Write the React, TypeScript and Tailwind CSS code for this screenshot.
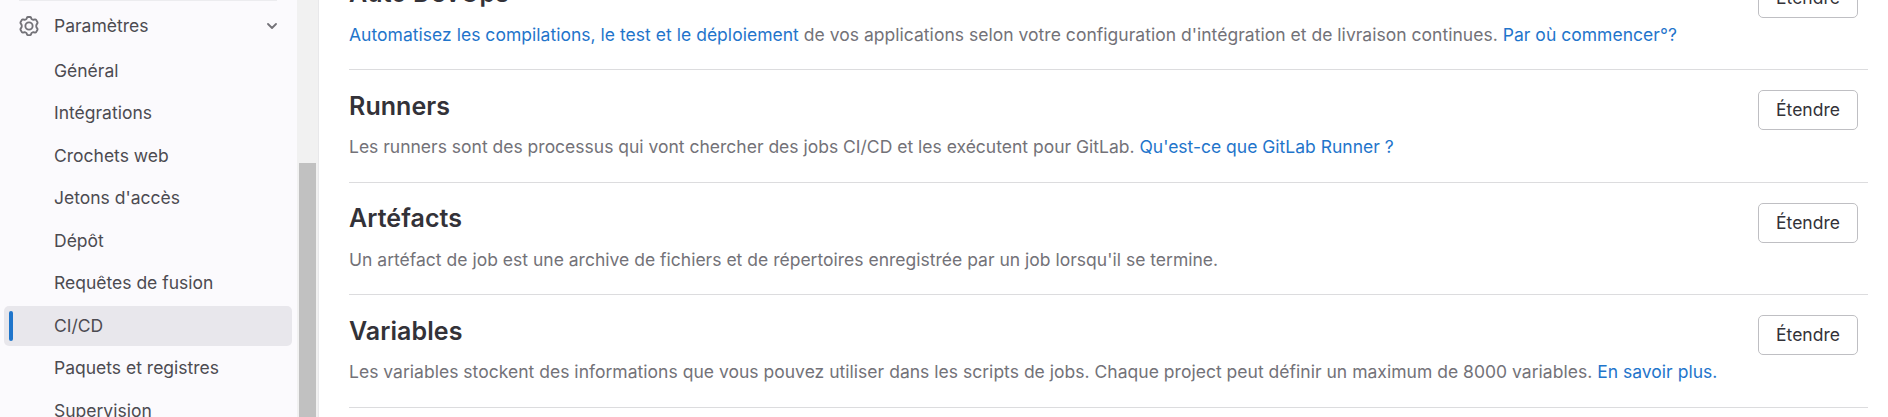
import React from "react";

const items = [
  "Général",
  "Intégrations",
  "Crochets web",
  "Jetons d'accès",
  "Dépôt",
  "Requêtes de fusion",
  "CI/CD",
  "Paquets et registres",
  "Supervision",
];

function GearIcon() {
  return (
    <svg className="h-5 w-5" viewBox="0 0 16 16" fill="none" stroke="#737278" strokeWidth="1.5" strokeLinejoin="round">
      <path d="M7.1.75H8.9Q9.4.75 9.6 1.3L9.9 2.1Q10.1 2.6 10.6 2.8Q11.1 3.1 11.6 3L12.9 2.75Q13.4 2.7 13.7 3.1L14.8 5Q15 5.5 14.7 5.9L14.1 6.7Q13.8 7.1 13.8 8T14.1 9.3L14.7 10.1Q15 10.5 14.8 11L13.7 12.9Q13.4 13.3 12.9 13.25L11.6 13Q11.1 12.9 10.6 13.2Q10.1 13.4 9.9 13.9L9.6 14.7Q9.4 15.25 8.9 15.25H7.1Q6.6 15.25 6.4 14.7L6.1 13.9Q5.9 13.4 5.4 13.2Q4.9 12.9 4.4 13L3.1 13.25Q2.6 13.3 2.3 12.9L1.2 11Q1 10.5 1.3 10.1L1.9 9.3Q2.2 8.9 2.2 8T1.9 6.7L1.3 5.9Q1 5.5 1.2 5L2.3 3.1Q2.6 2.7 3.1 2.75L4.4 3Q4.9 3.1 5.4 2.8Q5.9 2.6 6.1 2.1L6.4 1.3Q6.6.75 7.1.75Z" />
      <circle cx="8" cy="8" r="2.9" />
    </svg>
  );
}

type SectionProps = { title: string; tracking?: string; children: React.ReactNode };

function Section({ title, tracking = "", children }: SectionProps) {
  return (
    <section className="flex h-[112.5px] shrink-0 items-start justify-between border-b border-[#dcdcde] pr-2.5">
      <div className="pt-[20.5px]">
        <h4 className="text-[25px] leading-[31px] font-semibold tracking-[0.07px] text-[#333238]">{title}</h4>
        <p className={`mt-[12.5px] text-[17.5px] leading-[26px] whitespace-nowrap text-[#737278] ${tracking}`}>
          {children}
        </p>
      </div>
      <button className="mt-5 h-10 w-[100px] rounded-[5px] border border-[#bfbfc3] bg-white text-[17.5px] leading-5 text-[#333238]">
        Étendre
      </button>
    </section>
  );
}

function Link({ children }: { children: React.ReactNode }) {
  return <a className="text-[#1f75cb]">{children}</a>;
}

export default function App() {
  return (
    <div className="flex h-[417px] w-full overflow-hidden bg-white font-['Inter',sans-serif]">
      <aside className="flex w-[319px] shrink-0 border-r border-[#e8e8ea] bg-[#fbfafd]">
        <nav className="w-[297px] shrink-0 pr-[5px] pl-1 text-[17.5px] text-[#4c4b51]">
          <div className="mr-[15px] ml-[15px] h-px bg-[#ececef]" />
          <div className="mt-[5px] flex h-10 items-center pr-[15px] pl-[15px]">
            <GearIcon />
            <span className="ml-[15px] flex-1">Paramètres</span>
            <svg className="h-2.5 w-2.5" viewBox="0 0 10 10" fill="none" stroke="#737278" strokeWidth="1.8" strokeLinecap="round" strokeLinejoin="round">
              <path d="M1 3 5 7 9 3" />
            </svg>
          </div>
          <ul className="mt-[5px] flex flex-col gap-[2.5px]">
            {items.map((name) => (
              <li
                key={name}
                className={
                  name === "CI/CD"
                    ? "flex h-10 shrink-0 items-center rounded-[5px] bg-[#e8e7ec] pl-[5px]"
                    : "flex h-10 shrink-0 items-center pl-[5px]"
                }
              >
                <span className={name === "CI/CD" ? "h-[30px] w-1 rounded-full bg-[#1f75cb]" : "h-[30px] w-1"} />
                <span className="ml-[41px]">{name}</span>
              </li>
            ))}
          </ul>
        </nav>
        <div className="w-[21px] bg-[#f1f1f1] pt-[163px] pl-0.5">
          <div className="h-[254px] w-[17px] bg-[#c1c1c1]" />
        </div>
      </aside>
      <main className="-mt-[42.5px] ml-[30px] flex w-[1519px] flex-col">
        <Section title="Auto DevOps" tracking="tracking-[0.026px]">
          <Link>Automatisez les compilations, le test et le déploiement</Link> de vos applications selon votre
          configuration d'intégration et de livraison continues. <Link>Par où commencer°?</Link>
        </Section>
        <Section title="Runners">
          Les runners sont des processus qui vont chercher des jobs CI/CD et les exécutent pour GitLab.{" "}
          <Link>Qu'est-ce que GitLab Runner ?</Link>
        </Section>
        <Section title="Artéfacts" tracking="tracking-[0.01px]">
          Un artéfact de job est une archive de fichiers et de répertoires enregistrée par un job lorsqu'il se termine.
        </Section>
        <Section title="Variables" tracking="tracking-[0.02px]">
          Les variables stockent des informations que vous pouvez utiliser dans les scripts de jobs. Chaque project peut
          définir un maximum de 8000 variables. <Link>En savoir plus.</Link>
        </Section>
      </main>
    </div>
  );
}
